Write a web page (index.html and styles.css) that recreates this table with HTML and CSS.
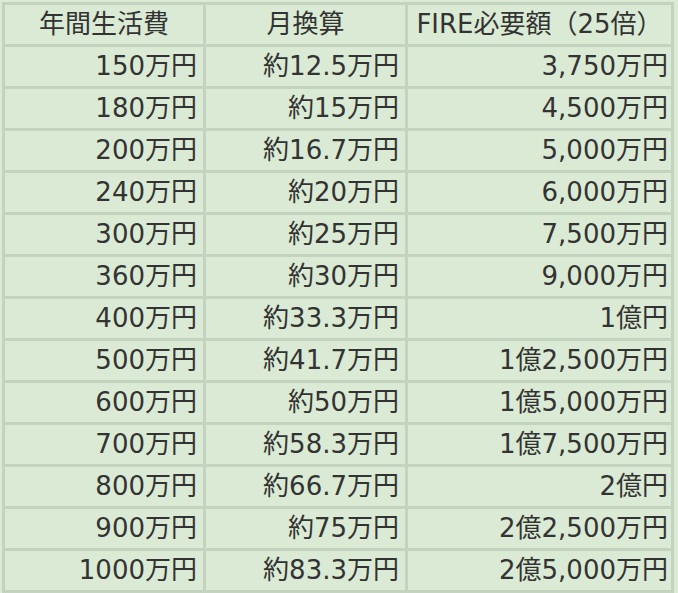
FILE: index.html
```html
<!DOCTYPE html>
<html lang="ja">
<head>
<meta charset="utf-8">
<title>FIRE必要額</title>
<link rel="stylesheet" href="styles.css">
</head>
<body>
<table class="fire-table">
  <colgroup>
    <col class="c1"><col class="c2"><col class="c3">
  </colgroup>
  <thead>
    <tr><th>年間生活費</th><th>月換算</th><th>FIRE必要額（25倍）</th></tr>
  </thead>
  <tbody>
    <tr><td>150万円</td><td>約12.5万円</td><td class="last">3,750万円</td></tr>
    <tr><td>180万円</td><td>約15万円</td><td class="last">4,500万円</td></tr>
    <tr><td>200万円</td><td>約16.7万円</td><td class="last">5,000万円</td></tr>
    <tr><td>240万円</td><td>約20万円</td><td class="last">6,000万円</td></tr>
    <tr><td>300万円</td><td>約25万円</td><td class="last">7,500万円</td></tr>
    <tr><td>360万円</td><td>約30万円</td><td class="last">9,000万円</td></tr>
    <tr><td>400万円</td><td>約33.3万円</td><td class="last">1億円</td></tr>
    <tr><td>500万円</td><td>約41.7万円</td><td class="last">1億2,500万円</td></tr>
    <tr><td>600万円</td><td>約50万円</td><td class="last">1億5,000万円</td></tr>
    <tr><td>700万円</td><td>約58.3万円</td><td class="last">1億7,500万円</td></tr>
    <tr><td>800万円</td><td>約66.7万円</td><td class="last">2億円</td></tr>
    <tr><td>900万円</td><td>約75万円</td><td class="last">2億2,500万円</td></tr>
    <tr><td>1000万円</td><td>約83.3万円</td><td class="last">2億5,000万円</td></tr>
  </tbody>
</table>
</body>
</html>
```
FILE: styles.css
```css
html, body {
  margin: 0;
  padding: 0;
  background: #daead4;
}
body {
  padding: 2px 0 0 2px;
  font-family: "DejaVu Sans", "Noto Sans CJK JP", sans-serif;
  color: #333333;
}
.fire-table {
  border-collapse: separate;
  border-spacing: 0;
  table-layout: fixed;
  width: 672px;
  border-left: 3px solid #c4d2c0;
  border-top: 3px solid #c4d2c0;
  background: #daead4;
}
.c1 { width: 201px; }
.c2 { width: 202px; }
.c3 { width: 266px; }
.fire-table th,
.fire-table td {
  height: 39px;
  padding: 0 6px 0 0;
  border-right: 3px solid #c4d2c0;
  border-bottom: 3px solid #c4d2c0;
  font-size: 26px;
  font-weight: normal;
  line-height: 39px;
  white-space: nowrap;
  vertical-align: middle;
  box-sizing: content-box;
}
.fire-table th {
  text-align: center;
  padding: 0;
}
.fire-table td {
  text-align: right;
}
.fire-table td.last {
  padding-right: 3px;
}
```
